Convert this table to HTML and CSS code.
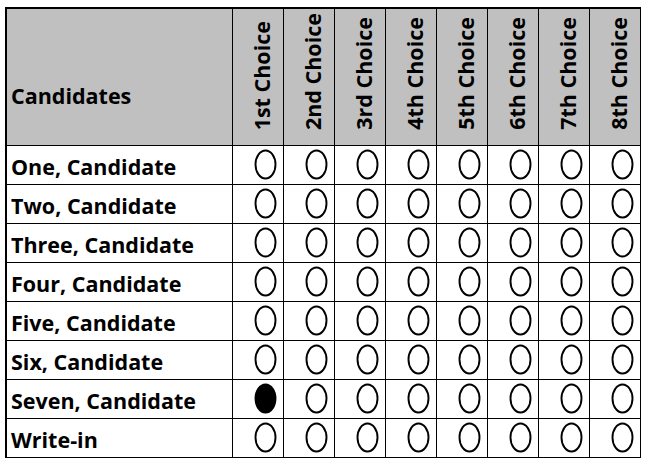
FILE: index.html
```html
<!DOCTYPE html>
<html>
<head>
<meta charset="utf-8">
<link rel="stylesheet" href="styles.css">
</head>
<body>
<div class="ballot">
  <div class="cell head name-head">Candidates</div>
  <div class="cell head choice"><span>1st Choice</span></div>
  <div class="cell head choice"><span>2nd Choice</span></div>
  <div class="cell head choice"><span>3rd Choice</span></div>
  <div class="cell head choice"><span>4th Choice</span></div>
  <div class="cell head choice"><span>5th Choice</span></div>
  <div class="cell head choice"><span>6th Choice</span></div>
  <div class="cell head choice"><span>7th Choice</span></div>
  <div class="cell head choice"><span>8th Choice</span></div>

  <div class="cell name">One, Candidate</div>
  <div class="cell mark"><svg viewBox="0 0 23 31"><ellipse class="oval" cx="11.5" cy="15.5" rx="10" ry="14"/></svg></div>
  <div class="cell mark"><svg viewBox="0 0 23 31"><ellipse class="oval" cx="11.5" cy="15.5" rx="10" ry="14"/></svg></div>
  <div class="cell mark"><svg viewBox="0 0 23 31"><ellipse class="oval" cx="11.5" cy="15.5" rx="10" ry="14"/></svg></div>
  <div class="cell mark"><svg viewBox="0 0 23 31"><ellipse class="oval" cx="11.5" cy="15.5" rx="10" ry="14"/></svg></div>
  <div class="cell mark"><svg viewBox="0 0 23 31"><ellipse class="oval" cx="11.5" cy="15.5" rx="10" ry="14"/></svg></div>
  <div class="cell mark"><svg viewBox="0 0 23 31"><ellipse class="oval" cx="11.5" cy="15.5" rx="10" ry="14"/></svg></div>
  <div class="cell mark"><svg viewBox="0 0 23 31"><ellipse class="oval" cx="11.5" cy="15.5" rx="10" ry="14"/></svg></div>
  <div class="cell mark"><svg viewBox="0 0 23 31"><ellipse class="oval" cx="11.5" cy="15.5" rx="10" ry="14"/></svg></div>

  <div class="cell name">Two, Candidate</div>
  <div class="cell mark"><svg viewBox="0 0 23 31"><ellipse class="oval" cx="11.5" cy="15.5" rx="10" ry="14"/></svg></div>
  <div class="cell mark"><svg viewBox="0 0 23 31"><ellipse class="oval" cx="11.5" cy="15.5" rx="10" ry="14"/></svg></div>
  <div class="cell mark"><svg viewBox="0 0 23 31"><ellipse class="oval" cx="11.5" cy="15.5" rx="10" ry="14"/></svg></div>
  <div class="cell mark"><svg viewBox="0 0 23 31"><ellipse class="oval" cx="11.5" cy="15.5" rx="10" ry="14"/></svg></div>
  <div class="cell mark"><svg viewBox="0 0 23 31"><ellipse class="oval" cx="11.5" cy="15.5" rx="10" ry="14"/></svg></div>
  <div class="cell mark"><svg viewBox="0 0 23 31"><ellipse class="oval" cx="11.5" cy="15.5" rx="10" ry="14"/></svg></div>
  <div class="cell mark"><svg viewBox="0 0 23 31"><ellipse class="oval" cx="11.5" cy="15.5" rx="10" ry="14"/></svg></div>
  <div class="cell mark"><svg viewBox="0 0 23 31"><ellipse class="oval" cx="11.5" cy="15.5" rx="10" ry="14"/></svg></div>

  <div class="cell name">Three, Candidate</div>
  <div class="cell mark"><svg viewBox="0 0 23 31"><ellipse class="oval" cx="11.5" cy="15.5" rx="10" ry="14"/></svg></div>
  <div class="cell mark"><svg viewBox="0 0 23 31"><ellipse class="oval" cx="11.5" cy="15.5" rx="10" ry="14"/></svg></div>
  <div class="cell mark"><svg viewBox="0 0 23 31"><ellipse class="oval" cx="11.5" cy="15.5" rx="10" ry="14"/></svg></div>
  <div class="cell mark"><svg viewBox="0 0 23 31"><ellipse class="oval" cx="11.5" cy="15.5" rx="10" ry="14"/></svg></div>
  <div class="cell mark"><svg viewBox="0 0 23 31"><ellipse class="oval" cx="11.5" cy="15.5" rx="10" ry="14"/></svg></div>
  <div class="cell mark"><svg viewBox="0 0 23 31"><ellipse class="oval" cx="11.5" cy="15.5" rx="10" ry="14"/></svg></div>
  <div class="cell mark"><svg viewBox="0 0 23 31"><ellipse class="oval" cx="11.5" cy="15.5" rx="10" ry="14"/></svg></div>
  <div class="cell mark"><svg viewBox="0 0 23 31"><ellipse class="oval" cx="11.5" cy="15.5" rx="10" ry="14"/></svg></div>

  <div class="cell name">Four, Candidate</div>
  <div class="cell mark"><svg viewBox="0 0 23 31"><ellipse class="oval" cx="11.5" cy="15.5" rx="10" ry="14"/></svg></div>
  <div class="cell mark"><svg viewBox="0 0 23 31"><ellipse class="oval" cx="11.5" cy="15.5" rx="10" ry="14"/></svg></div>
  <div class="cell mark"><svg viewBox="0 0 23 31"><ellipse class="oval" cx="11.5" cy="15.5" rx="10" ry="14"/></svg></div>
  <div class="cell mark"><svg viewBox="0 0 23 31"><ellipse class="oval" cx="11.5" cy="15.5" rx="10" ry="14"/></svg></div>
  <div class="cell mark"><svg viewBox="0 0 23 31"><ellipse class="oval" cx="11.5" cy="15.5" rx="10" ry="14"/></svg></div>
  <div class="cell mark"><svg viewBox="0 0 23 31"><ellipse class="oval" cx="11.5" cy="15.5" rx="10" ry="14"/></svg></div>
  <div class="cell mark"><svg viewBox="0 0 23 31"><ellipse class="oval" cx="11.5" cy="15.5" rx="10" ry="14"/></svg></div>
  <div class="cell mark"><svg viewBox="0 0 23 31"><ellipse class="oval" cx="11.5" cy="15.5" rx="10" ry="14"/></svg></div>

  <div class="cell name">Five, Candidate</div>
  <div class="cell mark"><svg viewBox="0 0 23 31"><ellipse class="oval" cx="11.5" cy="15.5" rx="10" ry="14"/></svg></div>
  <div class="cell mark"><svg viewBox="0 0 23 31"><ellipse class="oval" cx="11.5" cy="15.5" rx="10" ry="14"/></svg></div>
  <div class="cell mark"><svg viewBox="0 0 23 31"><ellipse class="oval" cx="11.5" cy="15.5" rx="10" ry="14"/></svg></div>
  <div class="cell mark"><svg viewBox="0 0 23 31"><ellipse class="oval" cx="11.5" cy="15.5" rx="10" ry="14"/></svg></div>
  <div class="cell mark"><svg viewBox="0 0 23 31"><ellipse class="oval" cx="11.5" cy="15.5" rx="10" ry="14"/></svg></div>
  <div class="cell mark"><svg viewBox="0 0 23 31"><ellipse class="oval" cx="11.5" cy="15.5" rx="10" ry="14"/></svg></div>
  <div class="cell mark"><svg viewBox="0 0 23 31"><ellipse class="oval" cx="11.5" cy="15.5" rx="10" ry="14"/></svg></div>
  <div class="cell mark"><svg viewBox="0 0 23 31"><ellipse class="oval" cx="11.5" cy="15.5" rx="10" ry="14"/></svg></div>

  <div class="cell name">Six, Candidate</div>
  <div class="cell mark"><svg viewBox="0 0 23 31"><ellipse class="oval" cx="11.5" cy="15.5" rx="10" ry="14"/></svg></div>
  <div class="cell mark"><svg viewBox="0 0 23 31"><ellipse class="oval" cx="11.5" cy="15.5" rx="10" ry="14"/></svg></div>
  <div class="cell mark"><svg viewBox="0 0 23 31"><ellipse class="oval" cx="11.5" cy="15.5" rx="10" ry="14"/></svg></div>
  <div class="cell mark"><svg viewBox="0 0 23 31"><ellipse class="oval" cx="11.5" cy="15.5" rx="10" ry="14"/></svg></div>
  <div class="cell mark"><svg viewBox="0 0 23 31"><ellipse class="oval" cx="11.5" cy="15.5" rx="10" ry="14"/></svg></div>
  <div class="cell mark"><svg viewBox="0 0 23 31"><ellipse class="oval" cx="11.5" cy="15.5" rx="10" ry="14"/></svg></div>
  <div class="cell mark"><svg viewBox="0 0 23 31"><ellipse class="oval" cx="11.5" cy="15.5" rx="10" ry="14"/></svg></div>
  <div class="cell mark"><svg viewBox="0 0 23 31"><ellipse class="oval" cx="11.5" cy="15.5" rx="10" ry="14"/></svg></div>

  <div class="cell name">Seven, Candidate</div>
  <div class="cell mark"><svg viewBox="0 0 23 31"><ellipse class="oval filled" cx="11.5" cy="15.5" rx="10" ry="14"/></svg></div>
  <div class="cell mark"><svg viewBox="0 0 23 31"><ellipse class="oval" cx="11.5" cy="15.5" rx="10" ry="14"/></svg></div>
  <div class="cell mark"><svg viewBox="0 0 23 31"><ellipse class="oval" cx="11.5" cy="15.5" rx="10" ry="14"/></svg></div>
  <div class="cell mark"><svg viewBox="0 0 23 31"><ellipse class="oval" cx="11.5" cy="15.5" rx="10" ry="14"/></svg></div>
  <div class="cell mark"><svg viewBox="0 0 23 31"><ellipse class="oval" cx="11.5" cy="15.5" rx="10" ry="14"/></svg></div>
  <div class="cell mark"><svg viewBox="0 0 23 31"><ellipse class="oval" cx="11.5" cy="15.5" rx="10" ry="14"/></svg></div>
  <div class="cell mark"><svg viewBox="0 0 23 31"><ellipse class="oval" cx="11.5" cy="15.5" rx="10" ry="14"/></svg></div>
  <div class="cell mark"><svg viewBox="0 0 23 31"><ellipse class="oval" cx="11.5" cy="15.5" rx="10" ry="14"/></svg></div>

  <div class="cell name">Write-in</div>
  <div class="cell mark"><svg viewBox="0 0 23 31"><ellipse class="oval" cx="11.5" cy="15.5" rx="10" ry="14"/></svg></div>
  <div class="cell mark"><svg viewBox="0 0 23 31"><ellipse class="oval" cx="11.5" cy="15.5" rx="10" ry="14"/></svg></div>
  <div class="cell mark"><svg viewBox="0 0 23 31"><ellipse class="oval" cx="11.5" cy="15.5" rx="10" ry="14"/></svg></div>
  <div class="cell mark"><svg viewBox="0 0 23 31"><ellipse class="oval" cx="11.5" cy="15.5" rx="10" ry="14"/></svg></div>
  <div class="cell mark"><svg viewBox="0 0 23 31"><ellipse class="oval" cx="11.5" cy="15.5" rx="10" ry="14"/></svg></div>
  <div class="cell mark"><svg viewBox="0 0 23 31"><ellipse class="oval" cx="11.5" cy="15.5" rx="10" ry="14"/></svg></div>
  <div class="cell mark"><svg viewBox="0 0 23 31"><ellipse class="oval" cx="11.5" cy="15.5" rx="10" ry="14"/></svg></div>
  <div class="cell mark"><svg viewBox="0 0 23 31"><ellipse class="oval" cx="11.5" cy="15.5" rx="10" ry="14"/></svg></div>
</div>
</body>
</html>
```
FILE: styles.css
```css
html, body { margin: 0; padding: 0; background: #fff; }
body { padding: 7px 0 0 5px; font-family: "Open Sans", "Liberation Sans", sans-serif; color: #000; }
.ballot {
  display: grid;
  grid-template-columns: 226px repeat(8, 51px);
  grid-template-rows: 137px repeat(8, 39px);
  border-top: 2px solid #000;
  border-left: 2px solid #000;
  width: max-content;
}
.cell {
  border-right: 1px solid #000;
  border-bottom: 1px solid #000;
  box-sizing: border-box;
}
.head { background: #c0c0c0; }
.name-head {
  font-weight: 700; font-size: 21.5px; line-height: 28px;
  padding: 73px 0 0 4px;
}
.choice {
  display: flex; justify-content: center; align-items: flex-end;
  padding: 0 0 15px 7px;
}
.choice span {
  writing-mode: vertical-rl; transform: rotate(180deg);
  font-weight: 700; font-size: 21.5px; line-height: 22px; white-space: nowrap;
}
.name {
  font-weight: 700; font-size: 21.5px; line-height: 28px;
  padding: 7px 0 0 4px; white-space: nowrap;
}
.mark {
  display: flex; justify-content: flex-end; align-items: flex-start;
  padding: 3px 6px 0 0;
}
.mark svg { display: block; width: 23px; height: 31px; }
.oval { fill: none; stroke: #000; stroke-width: 1.9; }
.oval.filled { fill: #000; }
```
